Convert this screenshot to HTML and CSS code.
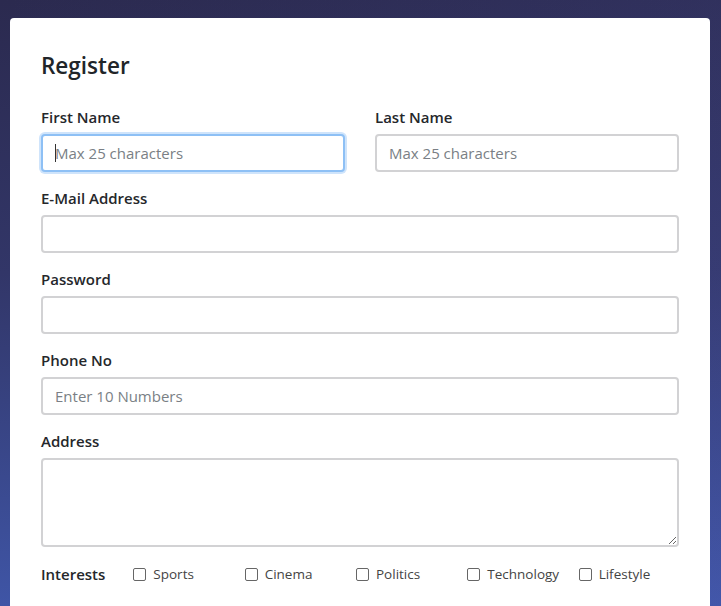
FILE: index.html
```html
<!DOCTYPE html>
<html lang="en">
<head>
<meta charset="utf-8">
<title>Register</title>
<link rel="stylesheet" href="styles.css">
</head>
<body>
<main class="card">
  <h3 class="title">Register</h3>
  <form class="form">
    <div class="row2">
      <div class="group">
        <label class="label" for="fn">First Name</label>
        <div class="field-wrap">
          <input id="fn" class="input focused" type="text" placeholder="Max 25 characters">
          <span class="caret"></span>
        </div>
      </div>
      <div class="group">
        <label class="label" for="ln">Last Name</label>
        <input id="ln" class="input" type="text" placeholder="Max 25 characters">
      </div>
    </div>
    <div class="group">
      <label class="label" for="em">E-Mail Address</label>
      <input id="em" class="input" type="email">
    </div>
    <div class="group">
      <label class="label" for="pw">Password</label>
      <input id="pw" class="input" type="password">
    </div>
    <div class="group">
      <label class="label" for="ph">Phone No</label>
      <input id="ph" class="input" type="text" placeholder="Enter 10 Numbers">
    </div>
    <div class="group">
      <label class="label" for="ad">Address</label>
      <textarea id="ad" class="input textarea"></textarea>
    </div>
    <div class="interests">
      <span class="label">Interests</span>
      <label class="check"><input type="checkbox" class="box">Sports</label>
      <label class="check"><input type="checkbox" class="box">Cinema</label>
      <label class="check"><input type="checkbox" class="box">Politics</label>
      <label class="check"><input type="checkbox" class="box">Technology</label>
      <label class="check"><input type="checkbox" class="box">Lifestyle</label>
    </div>
  </form>
</main>
</body>
</html>
```
FILE: styles.css
```css
html, body {
  margin: 0;
  height: 100%;
}
body {
  font-family: "Open Sans", "Noto Sans", sans-serif;
  color: #212529;
  background:
    linear-gradient(to right, rgba(40, 40, 80, 0) 0%, rgba(90, 100, 200, 0.12) 100%),
    linear-gradient(to bottom, #2b2a4f 0%, #323668 45%, #3f55a6 100%);
  overflow: hidden;
  padding: 18px 11px 0 10px;
  box-sizing: border-box;
}
.card {
  background: #fff;
  border-radius: 4px;
  padding: 33px 31px 40px;
  height: 700px;
  box-sizing: border-box;
}
.title {
  margin: 0 0 26px;
  font-size: 22.5px;
  font-weight: 600;
  line-height: 29px;
  color: #212529;
}
.form {
  display: flex;
  flex-direction: column;
}
.row2 {
  display: grid;
  grid-template-columns: 1fr 1fr;
  column-gap: 30px;
}
.group {
  display: flex;
  flex-direction: column;
  margin-bottom: 15px;
}
.label {
  font-size: 15px;
  font-weight: 600;
  line-height: 22px;
  margin-bottom: 6px;
  color: #25272b;
}
.field-wrap {
  position: relative;
  display: flex;
}
.field-wrap .input {
  flex: 1;
}
.input {
  height: 38px;
  box-sizing: border-box;
  border: 2px solid #d2d2d4;
  border-radius: 4px;
  padding: 0 12px;
  font-family: inherit;
  font-size: 15px;
  color: #495057;
  background: #fff;
  outline: none;
  width: 100%;
  margin: 0;
}
.input::placeholder {
  color: #7a7f85;
}
.input.focused {
  border-color: #8ec0f5;
  box-shadow: 0 0 0 2px #cfe4fb;
}
.caret {
  position: absolute;
  left: 14px;
  top: 10px;
  width: 1px;
  height: 18px;
  background: #333;
}
.textarea {
  height: 89px;
  padding: 8px 12px;
  resize: vertical;
}
.interests {
  display: grid;
  grid-template-columns: repeat(6, 1fr);
  column-gap: 30px;
  align-items: center;
  margin-top: 1px;
}
.interests .label {
  margin: 0;
  line-height: 22px;
}
.check {
  display: flex;
  align-items: center;
  font-size: 13.5px;
  color: #444;
  line-height: 22px;
  margin-left: -19px;
}
.box {
  appearance: none;
  width: 13px;
  height: 13px;
  margin: 0 7px 0 0;
  border: 1px solid #666;
  border-radius: 2px;
  background: #fff;
  box-sizing: border-box;
}
```
